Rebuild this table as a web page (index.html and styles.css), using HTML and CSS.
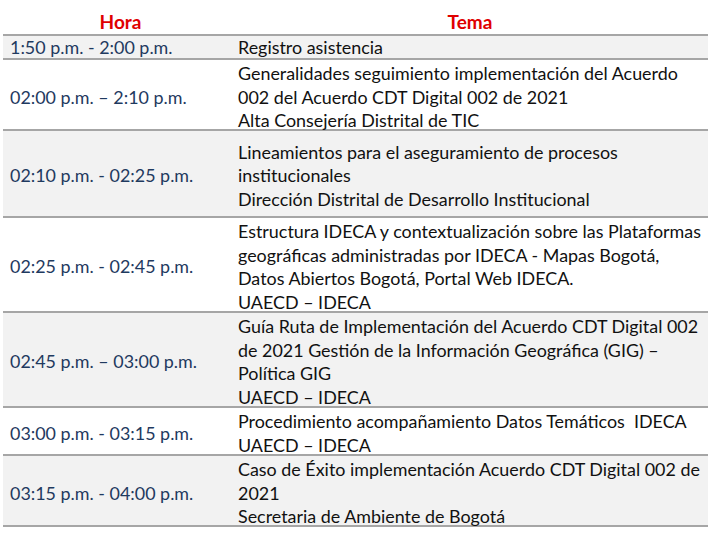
FILE: index.html
```html
<!DOCTYPE html>
<html lang="es">
<head>
<meta charset="utf-8">
<link rel="stylesheet" href="styles.css">
</head>
<body>
<div class="agenda">
  <div class="row head">
    <div class="c1">Hora</div>
    <div class="c2">Tema</div>
  </div>
  <div class="row shade r1">
    <div class="c1">1:50 p.m. - 2:00 p.m.</div>
    <div class="c2">Registro asistencia</div>
  </div>
  <div class="row r2">
    <div class="c1">02:00 p.m. – 2:10 p.m.</div>
    <div class="c2">Generalidades seguimiento implementación del Acuerdo<br>002 del Acuerdo CDT Digital 002 de 2021<br>Alta Consejería Distrital de TIC</div>
  </div>
  <div class="row shade r3">
    <div class="c1">02:10 p.m. - 02:25 p.m.</div>
    <div class="c2">Lineamientos para el aseguramiento de procesos<br>institucionales<br>Dirección Distrital de Desarrollo Institucional</div>
  </div>
  <div class="row r4">
    <div class="c1">02:25 p.m. - 02:45 p.m.</div>
    <div class="c2">Estructura IDECA y contextualización sobre las Plataformas<br>geográficas administradas por IDECA - Mapas Bogotá,<br>Datos Abiertos Bogotá, Portal Web IDECA.<br>UAECD – IDECA</div>
  </div>
  <div class="row shade r5">
    <div class="c1">02:45 p.m. – 03:00 p.m.</div>
    <div class="c2">Guía Ruta de Implementación del Acuerdo CDT Digital 002<br>de 2021 Gestión de la Información Geográfica (GIG) –<br>Política GIG<br>UAECD – IDECA</div>
  </div>
  <div class="row r6">
    <div class="c1">03:00 p.m. - 03:15 p.m.</div>
    <div class="c2">Procedimiento acompañamiento Datos Temáticos&nbsp; IDECA<br>UAECD – IDECA</div>
  </div>
  <div class="row shade r7">
    <div class="c1">03:15 p.m. - 04:00 p.m.</div>
    <div class="c2">Caso de Éxito implementación Acuerdo CDT Digital 002 de<br>2021<br>Secretaria de Ambiente de Bogotá</div>
  </div>
</div>
</body>
</html>
```
FILE: styles.css
```css
html, body {
  margin: 0;
  padding: 0;
  background: #ffffff;
}
body {
  font-family: Lato, "Open Sans", sans-serif;
  font-size: 17.9px;
  color: #111111;
}
.agenda {
  margin: 0 0 0 3px;
  width: 705px;
  display: flex;
  flex-direction: column;
}
.row {
  display: grid;
  grid-template-columns: 229px 1fr;
  align-items: center;
  border-bottom: 2px solid #a6a6a6;
  box-sizing: border-box;
  line-height: 23.5px;
}
.row .c1, .row .c2 {
  padding-top: 2px;
}
.shade {
  background: #f2f2f2;
}
.c1 {
  padding-left: 7px;
  color: #1f3a5f;
}
.c2 {
  padding-left: 6px;
}
.head {
  height: 36px;
  background: #ffffff;
  align-items: end;
}
.head .c1, .head .c2 {
  color: #e00000;
  font-weight: 700;
  font-size: 19px;
  text-align: center;
  padding: 0 0 0 0;
  line-height: 24px;
}
.head .c1 { padding-left: 6px; }
.r1 { height: 24px; }
.r2 { height: 71px; }
.r3 { height: 87px; }
.r3 .c2, .r3 .c1 { padding-top: 5px; }
.r4 { height: 95px; }
.r5 { height: 95px; }
.r6 { height: 48px; }
.r7 { height: 71px; }
.r1 .c1, .r1 .c2 { line-height: 22px; padding-top: 0; }
```
